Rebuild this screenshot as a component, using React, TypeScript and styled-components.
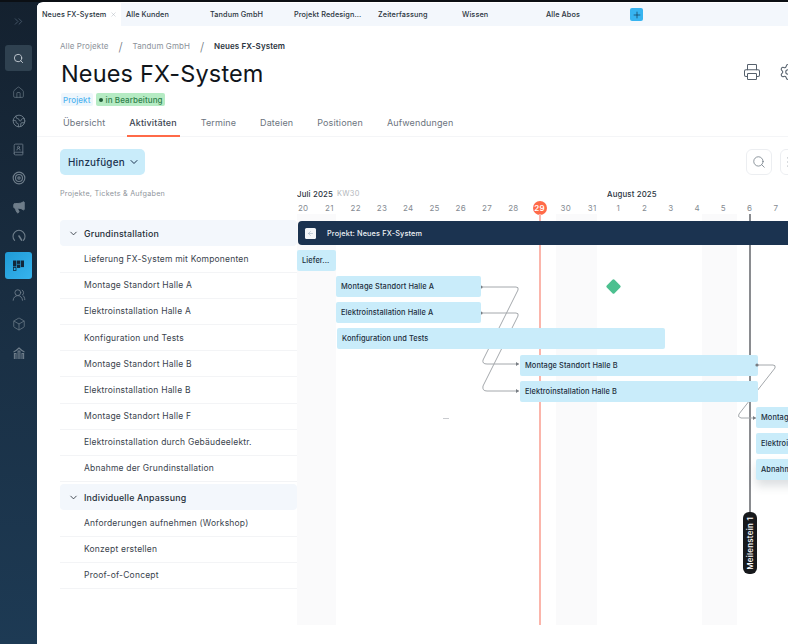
import React from "react";
import styled, { createGlobalStyle } from "styled-components";
import { BookUser, Box, ChevronDown, ChevronsRight, Earth, Home, Megaphone, Plus, Printer, Search, Settings, Target, UsersRound, X, ArrowLeft, SlidersHorizontal } from "lucide-react";

const Global = createGlobalStyle`
  html, body { margin: 0; padding: 0; height: 644px; overflow: hidden; background: #1a3045; }
  #root { height: 644px; }
  * { box-sizing: border-box; }
  body { font-family: Inter, "Noto Sans", sans-serif; -webkit-font-smoothing: antialiased; }
`;

const Shell = styled.div`
  display: flex; width: 788px; height: 644px; overflow: hidden;
  background: linear-gradient(180deg, #14212f 0%, #1a3045 55%, #1d3a54 100%);
  border-top: 2px solid #0b0f14;
`;
const Sidebar = styled.nav`
  width: 37px; flex: none; display: flex; flex-direction: column; align-items: center; padding-top: 11px;
`;
const Expand = styled.div`
  height: 16px; margin-bottom: 16px; color: #55677a; display: flex; align-items: center; justify-content: center;
`;
const SearchBtn = styled.div`
  width: 27px; height: 26px; border-radius: 3px; background: #2f4150; color: #c4ccd3;
  display: flex; align-items: center; justify-content: center; margin-bottom: 7px;
`;
const NavItem = styled.div<{ $active?: boolean }>`
  width: 27px; height: ${p => (p.$active ? 27 : 28.7)}px; border-radius: 3px; display: flex; align-items: center; justify-content: center;
  color: #6e7d8a;
  background: ${p => (p.$active ? "linear-gradient(135deg, #1f9ad6, #37b4ee)" : "transparent")};
  margin: ${p => (p.$active ? "2px 0" : "0")};
`;
const Main = styled.main`
  flex: 1; min-width: 0; background: #fff; border-top-left-radius: 6px; overflow: hidden; display: flex; flex-direction: column;
`;
const TabBar = styled.div`
  height: 23px; flex: none; display: flex; align-items: center; background: #f3f7fc; margin-top: 1px;
`;
const DocTab = styled.div<{ $active?: boolean }>`
  width: 84px; height: 100%; flex: none; padding-left: 5px; display: flex; align-items: center; gap: 4px;
  background: ${p => (p.$active ? "#fff" : "transparent")};
  font-size: 7.3px; font-weight: 500; color: #2a3440; letter-spacing: .1px; white-space: nowrap;
  svg { color: #a8afb8; }
`;
const AddTab = styled.div`
  width: 13px; height: 13px; border-radius: 2px; background: #37b4f0; color: #12354d; display: flex; align-items: center; justify-content: center; margin-left: 5px;
`;
const Header = styled.header`
  position: relative; padding: 12px 0 0 23px; flex: none;
`;
const Crumbs = styled.div`
  height: 16px; display: flex; align-items: center; font-size: 8px; color: #8b929a; letter-spacing: .1px; white-space: nowrap;
`;
const Slash = styled.span`
  margin: 0 9.8px; color: #6f7780; font-size: 12px; font-weight: 300;
`;
const CrumbNow = styled.span`
  color: #2a3440; font-weight: 600;
`;
const Title = styled.h1`
  margin: 5px 0 0 1px; height: 30px; line-height: 30px; font-size: 23.5px; font-weight: 400; color: #10151b; letter-spacing: .15px; white-space: nowrap;
`;
const Badges = styled.div`
  display: flex; gap: 3px; margin-top: 4px; margin-left: 1px;
`;
const Badge = styled.span<{ $kind: "type" | "status" }>`
  height: 13px; display: inline-flex; align-items: center; gap: 3px; padding: 0 2px; border-radius: 2px; font-size: 8px; font-weight: 500; letter-spacing: .1px;
  background: ${p => (p.$kind === "type" ? "#eef6fc" : "#b5ebc3")};
  color: ${p => (p.$kind === "type" ? "#50b4f0" : "#2f7f4b")};
`;
const Dot = styled.i`
  width: 4px; height: 4px; border-radius: 50%; background: #1f5a36; margin-left: 1px;
`;
const HeaderActions = styled.div`
  position: absolute; left: 706px; top: 37px; display: flex; gap: 18px; color: #55606c;
`;
const TabsRow = styled.div`
  display: flex; height: 26px; margin-top: 5px; padding-left: 26px; gap: 24px; border-bottom: 1px solid #f4f5f7; flex: none;
`;
const PageTab = styled.div<{ $active?: boolean }>`
  position: relative; padding-top: 5px; font-size: 9px; letter-spacing: .12px; line-height: 14px; white-space: nowrap;
  color: ${p => (p.$active ? "#3d4652" : "#6c747e")}; font-weight: ${p => (p.$active ? 500 : 400)};
  &::after { content: ""; display: ${p => (p.$active ? "block" : "none")}; position: absolute; left: -2px; right: -3px; bottom: -1px; height: 2px; background: #ff6a48; }
`;
const Toolbar = styled.div`
  height: 26px; margin: 12px 0 0 23px; display: flex; flex: none; align-items: stretch;
`;
const AddButton = styled.button`
  width: 85px; flex: none; border: 0; border-radius: 5px; background: #c9ecfa; color: #1b3350; font: 500 9.9px Inter, sans-serif; letter-spacing: .2px;
  display: flex; align-items: center; justify-content: flex-start; gap: 3px; padding: 0 0 0 8px;
`;
const IconButton = styled.div`
  width: 26px; flex: none; border: 1px solid #eceef1; border-radius: 6px; color: #6b7580; display: flex; align-items: center; justify-content: center;
  background: #fff;
`;
const ToolSpacer = styled.div`
  width: 601px; flex: none;
`;
const ToolGap = styled.div`
  width: 8px; flex: none;
`;
const Content = styled.section`
  margin-top: 11px; flex: 1; min-height: 0; display: flex; padding-left: 23px;
`;
const ListCol = styled.div`
  width: 237px; flex: none;
`;
const ListLabel = styled.div`
  height: 14px; line-height: 14px; margin: 1px 0 19px; font-size: 7.2px; letter-spacing: .25px; color: #8f959c; white-space: nowrap;
`;
const GroupRow = styled.div<{ $gap?: boolean }>`
  height: 26.4px; margin-top: ${p => (p.$gap ? 2 : 0)}px; background: #f3f7fc; border-radius: 4px; display: flex; align-items: center; padding-left: 8px; gap: 5px;
  font-size: 8.8px; font-weight: 500; color: #242d37; letter-spacing: .2px; white-space: nowrap;
`;
const TaskRow = styled.div`
  height: 26.2px; padding-left: 24px; display: flex; align-items: center; font-size: 8.5px; color: #3a434d; letter-spacing: .2px;
  border-bottom: 1px solid #f3f4f6; white-space: nowrap;
`;
const Timeline = styled.div`
  flex: 1; min-width: 0; overflow: hidden;
`;
const MonthRow = styled.div`
  position: relative; height: 14px; margin-top: 1px; line-height: 14px; font-size: 7.8px; font-weight: 500; color: #2a3440; letter-spacing: .15px; white-space: nowrap;
`;
const Week = styled.span`
  position: absolute; left: 40px; color: #b4b8bd; font-weight: 400; letter-spacing: .3px; font-size: 7.4px;
`;
const August = styled.span`
  position: absolute; left: 310px;
`;
const DayRow = styled.div`
  height: 13px; display: flex; margin-left: -7px;
`;
const Day = styled.div<{ $today?: boolean }>`
  width: 26.28px; flex: none; display: flex; align-items: center; justify-content: center; font-size: 8px; letter-spacing: .2px; color: #858b92;
  span { display: flex; align-items: center; justify-content: center; width: 14px; height: 14px; border-radius: 50%;
    background: ${p => (p.$today ? "#ff6a48" : "transparent")}; color: ${p => (p.$today ? "#fff" : "inherit")}; font-weight: ${p => (p.$today ? 600 : 400)}; }
`;
const Canvas = styled.div`
  position: relative; height: 430px; width: 600px;
`;
const Weekend = styled.div<{ $x: number; $w: number }>`
  position: absolute; top: 0; height: 411px; left: ${p => p.$x}px; width: ${p => p.$w}px; background: #fafafb;
`;
const TodayLine = styled.div`
  position: absolute; left: 242px; top: 0; width: 2px; height: 411px; background: #fbb5ab;
`;
const MilestoneLine = styled.div`
  position: absolute; left: 452px; top: 0; width: 2px; height: 300px; background: #8a8c90;
`;
const MilestonePill = styled.div`
  position: absolute; left: 446px; top: 298px; width: 14px; height: 62px; border-radius: 6px; background: #17191c; color: #fff;
  display: flex; align-items: center; justify-content: center; font-size: 8px; font-weight: 500; letter-spacing: .25px; white-space: nowrap;
  span { writing-mode: vertical-rl; transform: rotate(180deg); }
`;
const ProjectBar = styled.div`
  position: absolute; left: 1px; top: 7px; width: 540px; height: 24px; border-radius: 4px; background: #1b3350; color: #eef2f5;
  display: flex; align-items: center; padding-left: 7px; gap: 11px; font-size: 7.3px; font-weight: 500; letter-spacing: .15px; white-space: nowrap;
`;
const BackBox = styled.div`
  width: 11px; height: 11px; border-radius: 1.5px; background: #f3f6f9; color: #8aa0b4; display: flex; align-items: center; justify-content: center;
`;
const Bar = styled.div<{ $x: number; $y: number; $w: number; $shadow?: boolean }>`
  position: absolute; left: ${p => p.$x}px; top: ${p => p.$y}px; width: ${p => p.$w}px; height: 21px; border-radius: 2px; background: #c9ecfa;
  display: flex; align-items: center; padding-left: 5px; font-size: 7.4px; font-weight: 500; color: #1c2c3c; letter-spacing: .1px; white-space: nowrap; overflow: hidden;
  box-shadow: ${p => (p.$shadow ? "0 6px 10px rgba(60,80,90,.18)" : "none")};
`;
const Diamond = styled.div`
  position: absolute; left: 310.5px; top: 66.5px; width: 11px; height: 11px; border-radius: 1.5px; background: #4cc08f; transform: rotate(45deg);
`;
const StrayMark = styled.div`
  position: absolute; left: 146px; top: 204px; width: 6px; height: 1px; background: #c9cbcf;
`;
const Links = styled.svg`
  position: absolute; left: 0; top: 0; width: 600px; height: 430px; overflow: visible;
`;

const KanbanIcon = () => (
  <svg width="13" height="13" viewBox="0 0 13 13" fill="#12263a">
    <rect x="1" y="1.5" width="3.4" height="6" />
    <rect x="5" y="1.5" width="3.2" height="3.4" />
    <rect x="8.8" y="1.5" width="3.2" height="6.6" />
    <rect x="5" y="5.5" width="3.2" height="3.4" />
    <rect x="1.4" y="8.4" width="2.6" height="3.2" fill="none" stroke="#12263a" strokeWidth=".8" />
  </svg>
);
const GaugeIcon = () => (
  <svg width="14" height="14" viewBox="0 0 14 14" fill="none" stroke="currentColor" strokeWidth="1.1" strokeLinecap="round">
    <path d="M2.6 11.4A6 6 0 1 1 11.4 11.4" />
    <path d="M7 7l2.6 4.2" strokeWidth="1.6" />
  </svg>
);
const ChartIcon = () => (
  <svg width="14" height="14" viewBox="0 0 14 14" fill="none" stroke="currentColor" strokeWidth="1.1">
    <path d="M1.5 6Q4 5 7 2Q10 5 12.5 6" />
    <path d="M2.4 13V7.5h1.6V13M6.1 13V5h1.8v8M10 13V7.5h1.6V13" />
  </svg>
);

const tabs = ["Alle Kunden", "Tandum GmbH", "Projekt Redesign...", "Zeiterfassung", "Wissen", "Alle Abos"];
const pageTabs = ["Übersicht", "Aktivitäten", "Termine", "Dateien", "Positionen", "Aufwendungen"];
const days = [20, 21, 22, 23, 24, 25, 26, 27, 28, 29, 30, 31, 1, 2, 3, 4, 5, 6, 7, 8];
const group1 = ["Lieferung FX-System mit Komponenten", "Montage Standort Halle A", "Elektroinstallation Halle A", "Konfiguration und Tests", "Montage Standort Halle B", "Elektroinstallation Halle B", "Montage Standort Halle F", "Elektroinstallation durch Gebäudeelektr.", "Abnahme der Grundinstallation"];
const group2 = ["Anforderungen aufnehmen (Workshop)", "Konzept erstellen", "Proof-of-Concept"];
const bars = [
  { x: 0, y: 36, w: 39, t: "Liefer..." },
  { x: 39, y: 62, w: 145, t: "Montage Standort Halle A" },
  { x: 39, y: 88, w: 145, t: "Elektroinstallation Halle A" },
  { x: 40, y: 114, w: 328, t: "Konfiguration und Tests" },
  { x: 223, y: 141, w: 238, t: "Montage Standort Halle B" },
  { x: 223, y: 167, w: 238, t: "Elektroinstallation Halle B" },
  { x: 459, y: 193, w: 140, t: "Montage Standort Halle F" },
  { x: 459, y: 219, w: 140, t: "Elektroinstallation durch" },
  { x: 459, y: 245, w: 140, t: "Abnahme der Grundinstallation", shadow: true },
];
const links = [
  { d: "M184 73H219Q222 73 221 76L186 146Q185 150 190 150H222", end: [222, 150] },
  { d: "M184 99H219Q222 99 221 102L186 172Q185 177 190 177H222", end: [222, 177] },
  { d: "M460 151H476Q479 151 478 154L442 200Q440 203 444 204H459", end: [459, 204] },
];

export default function App() {
  return (
    <Shell>
      <Global />
      <Sidebar>
        <Expand><ChevronsRight size={13} strokeWidth={1.3} /></Expand>
        <SearchBtn><Search size={11} strokeWidth={2} /></SearchBtn>
        <NavItem><Home size={13} strokeWidth={1.2} /></NavItem>
        <NavItem><Earth size={14} strokeWidth={1.6} /></NavItem>
        <NavItem><BookUser size={13} strokeWidth={1.5} /></NavItem>
        <NavItem><Target size={14} strokeWidth={2} /></NavItem>
        <NavItem><Megaphone size={14} strokeWidth={1.6} fill="currentColor" /></NavItem>
        <NavItem><GaugeIcon /></NavItem>
        <NavItem $active><KanbanIcon /></NavItem>
        <NavItem><UsersRound size={14} strokeWidth={1.5} /></NavItem>
        <NavItem><Box size={14} strokeWidth={1.3} /></NavItem>
        <NavItem><ChartIcon /></NavItem>
      </Sidebar>
      <Main>
        <TabBar>
          <DocTab $active>Neues FX-System <X size={7} strokeWidth={1.5} /></DocTab>
          {tabs.map(t => <DocTab key={t}>{t}</DocTab>)}
          <AddTab><Plus size={10} strokeWidth={1.6} /></AddTab>
        </TabBar>
        <Header>
          <Crumbs>Alle Projekte<Slash>/</Slash>Tandum GmbH<Slash>/</Slash><CrumbNow>Neues FX-System</CrumbNow></Crumbs>
          <Title>Neues FX-System</Title>
          <Badges>
            <Badge $kind="type">Projekt</Badge>
            <Badge $kind="status"><Dot />in Bearbeitung</Badge>
          </Badges>
          <HeaderActions>
            <Printer size={18} strokeWidth={1.4} />
            <Settings size={18} strokeWidth={1.4} />
          </HeaderActions>
        </Header>
        <TabsRow>
          {pageTabs.map((t, i) => <PageTab key={t} $active={i === 1}>{t}</PageTab>)}
        </TabsRow>
        <Toolbar>
          <AddButton>Hinzufügen <ChevronDown size={12} strokeWidth={2} /></AddButton>
          <ToolSpacer />
          <IconButton><Search size={14} strokeWidth={1.3} /></IconButton>
          <ToolGap />
          <IconButton><SlidersHorizontal size={14} strokeWidth={1.3} /></IconButton>
        </Toolbar>
        <Content>
          <ListCol>
            <ListLabel>Projekte, Tickets &amp; Aufgaben</ListLabel>
            <GroupRow><ChevronDown size={11} strokeWidth={1.8} />Grundinstallation</GroupRow>
            {group1.map(t => <TaskRow key={t}>{t}</TaskRow>)}
            <GroupRow $gap><ChevronDown size={11} strokeWidth={1.8} />Individuelle Anpassung</GroupRow>
            {group2.map(t => <TaskRow key={t}>{t}</TaskRow>)}
          </ListCol>
          <Timeline>
            <MonthRow>Juli 2025<Week>KW30</Week><August>August 2025</August></MonthRow>
            <DayRow>
              {days.map(d => <Day key={d} $today={d === 29}><span>{d}</span></Day>)}
            </DayRow>
            <Canvas>
              <Weekend $x={0} $w={39} />
              <Weekend $x={259} $w={41} />
              <Weekend $x={405} $w={35} />
              <TodayLine />
              <MilestoneLine />
              <StrayMark />
              <Links viewBox="0 0 600 430" fill="none">
                {links.map(l => (
                  <g key={l.d}>
                    <path d={l.d} stroke="#a4a8ac" strokeWidth="1" />
                    <path d={`M${l.end[0] - 3} ${l.end[1] - 2}l3 2l-3 2z`} fill="#777c82" />
                  </g>
                ))}
                <circle cx="184" cy="73" r="1.6" fill="#777c82" />
                <circle cx="184" cy="99" r="1.6" fill="#777c82" />
              </Links>
              {bars.map(b => <Bar key={b.t} $x={b.x} $y={b.y} $w={b.w} $shadow={b.shadow}>{b.t}</Bar>)}
              <Links viewBox="0 0 600 430" fill="none">
                <circle cx="460" cy="151" r="1.6" fill="#777c82" />
              </Links>
              <Diamond />
              <ProjectBar><BackBox><ArrowLeft size={7} strokeWidth={1.6} /></BackBox>Projekt: Neues FX-System</ProjectBar>
              <MilestonePill><span>Meilenstein 1</span></MilestonePill>
            </Canvas>
          </Timeline>
        </Content>
      </Main>
    </Shell>
  );
}
